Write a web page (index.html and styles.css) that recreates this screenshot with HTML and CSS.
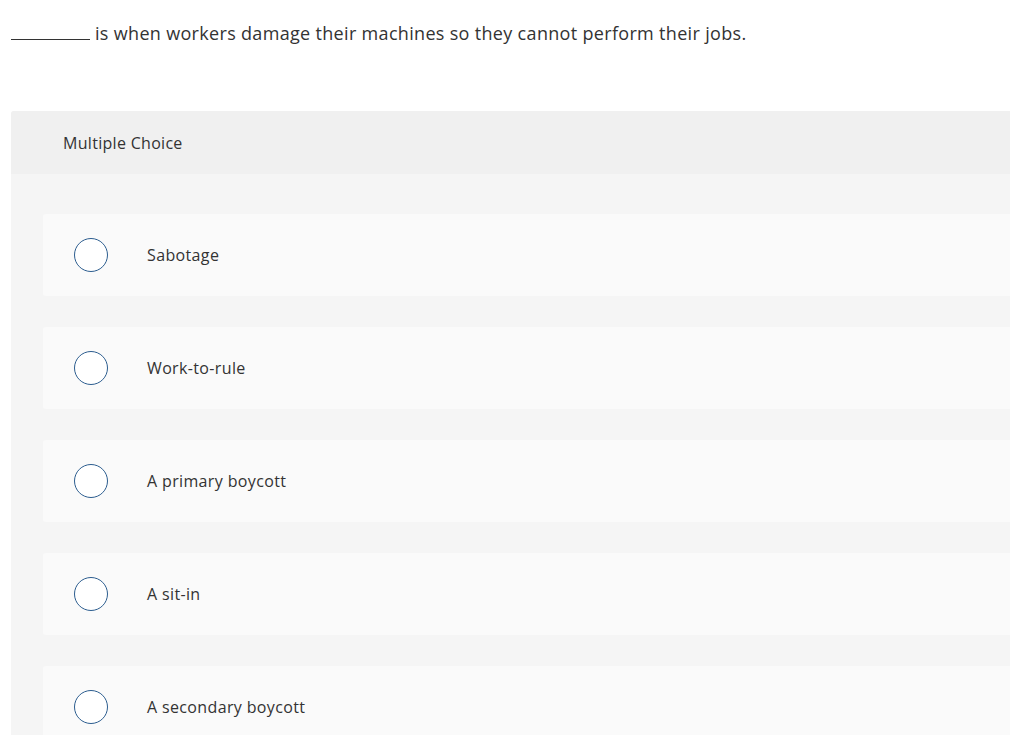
FILE: index.html
```html
<!DOCTYPE html>
<html lang="en">
<head>
    <meta charset="UTF-8">
    <meta name="viewport" content="width=device-width, initial-scale=1.0">
    <title>Multiple Choice</title>
    <link rel="stylesheet" href="styles.css">
</head>
<body>
    <div class="page">
        <p class="question"><span class="blank"></span>is when workers damage their machines so they cannot perform their jobs.</p>

        <div class="panel">
            <div class="panel-header">Multiple Choice</div>
            <div class="choices">
                <label class="choice">
                    <span class="radio"></span>
                    <span class="choice-text">Sabotage</span>
                </label>
                <label class="choice">
                    <span class="radio"></span>
                    <span class="choice-text">Work-to-rule</span>
                </label>
                <label class="choice">
                    <span class="radio"></span>
                    <span class="choice-text">A primary boycott</span>
                </label>
                <label class="choice">
                    <span class="radio"></span>
                    <span class="choice-text">A sit-in</span>
                </label>
                <label class="choice">
                    <span class="radio"></span>
                    <span class="choice-text">A secondary boycott</span>
                </label>
            </div>
        </div>
    </div>
</body>
</html>
```

FILE: styles.css
```css
body {
    margin: 0;
    font-family: 'Open Sans', 'Liberation Sans', sans-serif;
    color: #333;
    background-color: #ffffff;
}

.page {
    height: 735px;
    overflow: hidden;
}

.question {
    margin: 0;
    padding: 22px 0 0 11px;
    font-size: 18px;
    line-height: 22px;
    letter-spacing: 0.32px;
    color: #333;
}

.blank {
    display: inline-block;
    width: 79px;
    border-bottom: 1px solid #333;
    margin-right: 5px;
}

.panel {
    margin: 67px 0 0 11px;
    background-color: #f5f5f5;
    border-radius: 3px 0 0 0;
}

.panel-header {
    height: 63px;
    display: flex;
    align-items: center;
    padding-left: 52px;
    background-color: #f0f0f0;
    font-size: 16px;
    letter-spacing: 0.3px;
    border-radius: 3px 0 0 0;
}

.choices {
    display: flex;
    flex-direction: column;
    gap: 31px;
    padding: 40px 0 40px 32px;
}

.choice {
    height: 82px;
    display: flex;
    align-items: center;
    gap: 39px;
    padding-left: 31px;
    background-color: #fafafa;
    border-radius: 3px 0 0 3px;
    cursor: pointer;
}

.radio {
    width: 32px;
    height: 32px;
    border: 1.5px solid #2c5d8f;
    border-radius: 50%;
    background-color: #ffffff;
    flex-shrink: 0;
}

.choice-text {
    font-size: 16px;
    letter-spacing: 0.36px;
    color: #333;
}
```
